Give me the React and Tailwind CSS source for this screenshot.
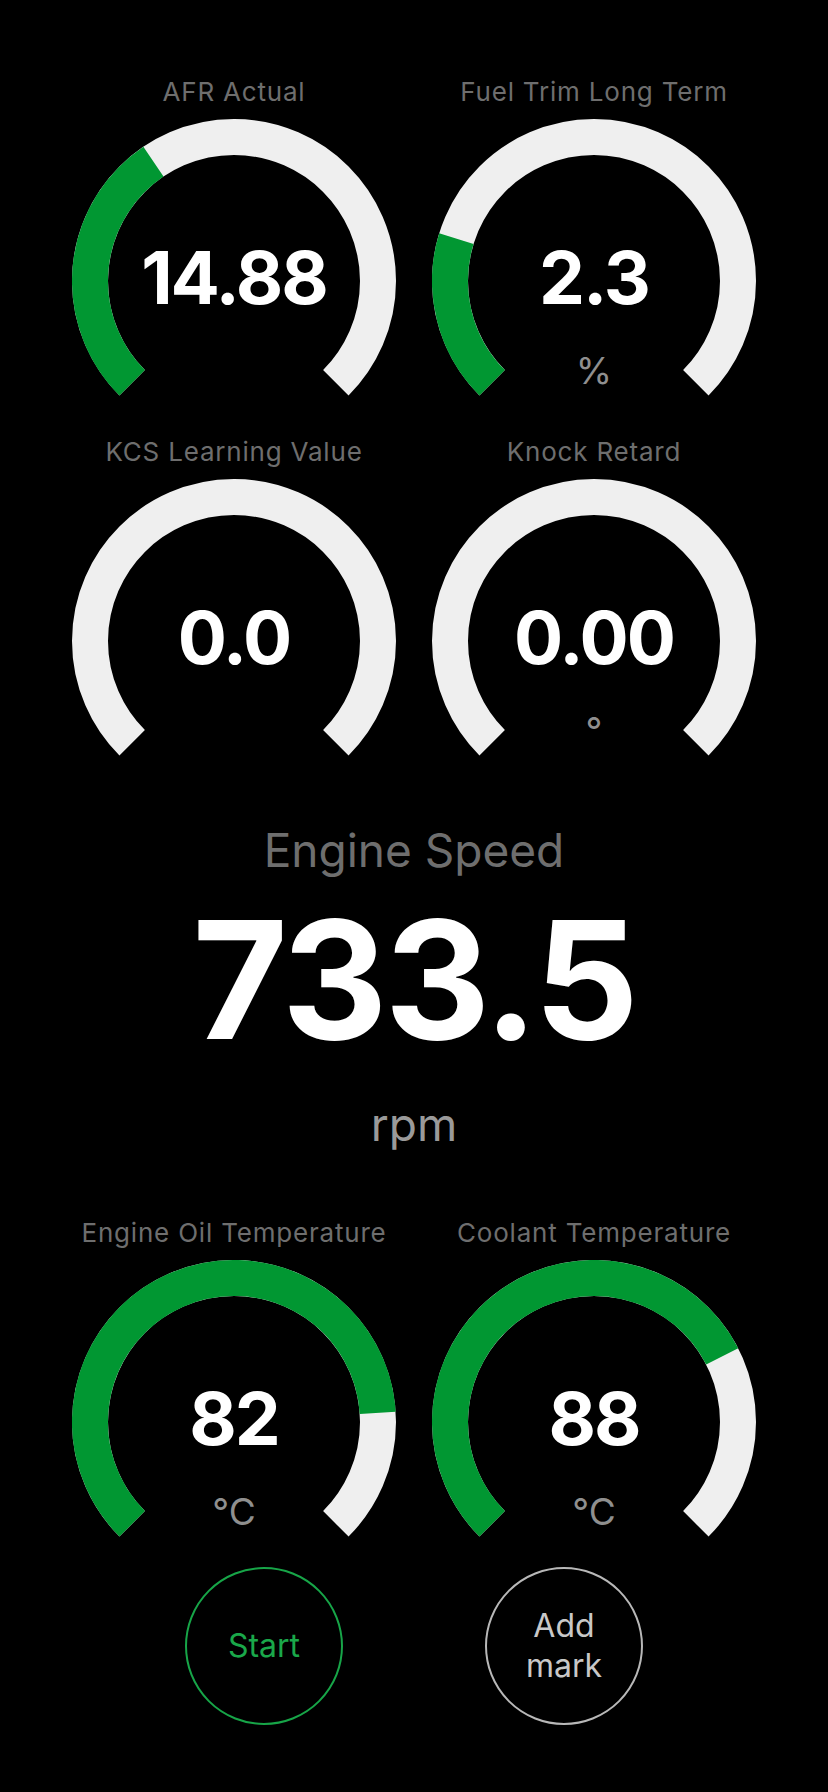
import React from "react";

const CX = 162;
const CY = 162;
const R = 144;

const pt = (deg) => {
  const a = (deg * Math.PI) / 180;
  return [CX + R * Math.cos(a), CY + R * Math.sin(a)];
};

const arcPath = (from, to) => {
  const [x1, y1] = pt(from);
  const [x2, y2] = pt(to);
  const large = to - from > 180 ? 1 : 0;
  return `M ${x1} ${y1} A ${R} ${R} 0 ${large} 1 ${x2} ${y2}`;
};

const Gauge = ({ label, value, unit, progress }) => {
  const end = 135 + 270 * progress;
  return (
    <div className="flex flex-col items-center">
      <div className="h-8 text-[26px] leading-8 tracking-[0.8px] text-[#6e6e6e] whitespace-nowrap">
        {label}
      </div>
      <div className="relative mt-[11px] w-[324px] h-[277px]">
        <svg width="324" height="277" viewBox="0 0 324 277">
          <path
            d={arcPath(135, 405)}
            fill="none"
            stroke="#efefef"
            strokeWidth="36"
          />
          {progress > 0 && (
            <path
              d={arcPath(135, end)}
              fill="none"
              stroke="#019732"
              strokeWidth="36"
            />
          )}
        </svg>
        <div className="absolute inset-x-0 top-[122px] text-center text-[73px] leading-none font-bold tracking-[-2px] text-white">
          {value}
        </div>
        {unit && (
          <div className="absolute inset-x-0 top-[233px] text-center text-[37px] leading-none text-[#8f8f8f]">
            {unit}
          </div>
        )}
      </div>
    </div>
  );
};

export default function App() {
  return (
    <div className="w-[828px] min-h-[1792px] bg-black font-['Inter',sans-serif] pt-[76px]">
      <div className="grid grid-cols-2 px-[54px] gap-y-[40px]">
        <Gauge label="AFR Actual" value="14.88" progress={0.374} />
        <Gauge label="Fuel Trim Long Term" value="2.3" unit="%" progress={0.23} />
        <Gauge label="KCS Learning Value" value="0.0" progress={0} />
        <Gauge label="Knock Retard" value="0.00" unit="°" progress={0} />
      </div>

      <div className="flex flex-col items-center mt-[66px]">
        <div className="h-14 text-[46px] leading-[56px] text-[#6e6e6e]">
          Engine Speed
        </div>
        <div className="mt-[20px] h-[164px] text-[164px] leading-none font-bold text-white tracking-[-0.02em]">
          733.5
        </div>
        <div className="mt-[34px] h-14 text-[46px] leading-[56px] text-[#9a9a9a]">
          rpm
        </div>
      </div>

      <div className="grid grid-cols-2 px-[54px] mt-[65px]">
        <Gauge label="Engine Oil Temperature" value="82" unit="°C" progress={0.82} />
        <Gauge label="Coolant Temperature" value="88" unit="°C" progress={0.733} />
      </div>

      <div className="flex mt-[30px] ml-[185px] gap-[142px]">
        <button className="w-[158px] h-[158px] rounded-full border-2 border-[#17a548] flex items-center justify-center text-[32px] text-[#1aa84a]">
          Start
        </button>
        <button className="w-[158px] h-[158px] rounded-full border-2 border-[#b8b8b8] flex items-center justify-center text-[32px] leading-[40px] text-[#c8c8c8] text-center">
          Add
          <br />
          mark
        </button>
      </div>
    </div>
  );
}
